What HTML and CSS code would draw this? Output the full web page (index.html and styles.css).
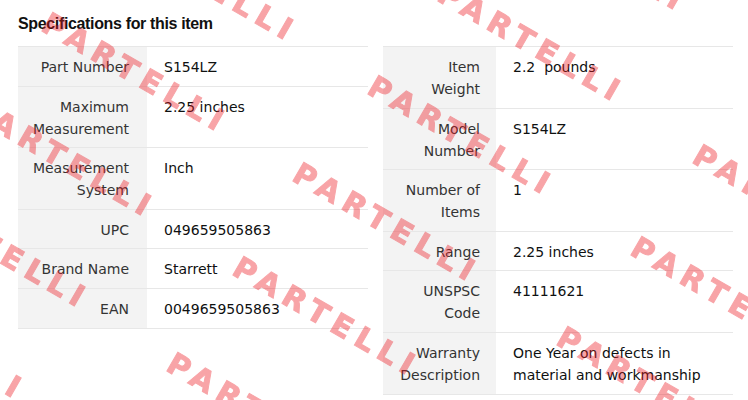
FILE: index.html
```html
<!doctype html>
<html lang="en">
<head>
    <meta charset="UTF-8">
    <title>Specifications for this item</title>
    <link rel="stylesheet" href="styles.css">
</head>
<body>
    <div class="specs">
        <h2 class="title">Specifications for this item</h2>
        <div class="tables">
            <table class="spec left">
                <tr><th>Part Number</th><td>S154LZ</td></tr>
                <tr><th>Maximum Measurement</th><td>2.25 inches</td></tr>
                <tr><th>Measurement System</th><td>Inch</td></tr>
                <tr><th>UPC</th><td>049659505863</td></tr>
                <tr><th>Brand Name</th><td>Starrett</td></tr>
                <tr><th>EAN</th><td>0049659505863</td></tr>
            </table>
            <table class="spec right">
                <tr><th>Item Weight</th><td>2.2&nbsp; pounds</td></tr>
                <tr><th>Model Number</th><td>S154LZ</td></tr>
                <tr><th>Number of Items</th><td>1</td></tr>
                <tr><th>Range</th><td>2.25 inches</td></tr>
                <tr><th>UNSPSC Code</th><td>41111621</td></tr>
                <tr><th>Warranty Description</th><td>One Year on defects in material and workmanship</td></tr>
            </table>
        </div>
    </div>

    <!-- watermark over the page -->
    <div class="marks" aria-hidden="true">
        <span class="mark m0">PARTELLI</span>
        <span class="mark m1">PARTELLI</span>
        <span class="mark m2">PARTELLI</span>
        <span class="mark m3">PARTELLI</span>
        <span class="mark m4">PARTELLI</span>
        <span class="mark m5">PARTELLI</span>
        <span class="mark m6">PARTELLI</span>
        <span class="mark m7">PARTELLI</span>
        <span class="mark m8">PARTELLI</span>
        <span class="mark m9">PARTELLI</span>
        <span class="mark m10">PARTELLI</span>
        <span class="mark m11">PARTELLI</span>
        <span class="mark m12">PARTELLI</span>
        <span class="mark m13">PARTELLI</span>
    </div>
</body>
</html>
```

FILE: styles.css
```css
* {
    margin: 0;
    padding: 0;
    box-sizing: border-box;
}
body {
    background: #fff;
    font: 14px/22px "DejaVu Sans", sans-serif;
    color: #0f1111;
}
.specs {
    padding: 14px 0 0 18px;
}
.title {
    font: bold 16px/20px "Liberation Sans", Arial, sans-serif;
    letter-spacing: -0.35px;
    color: #111;
    margin-bottom: 12px;
}
.tables {
    display: flex;
    align-items: flex-start;
    gap: 15px;
}
.spec {
    flex: none;
    width: 350px;
    table-layout: fixed;
    border-collapse: collapse;
}
.spec tr {
    border-top: 1px solid #e7e7e7;
    border-bottom: 1px solid #e7e7e7;
}
.spec th,
.spec td {
    vertical-align: top;
    padding: 9px 0 7.6px 17px;
}
.spec th {
    background-color: #f3f3f3;
    font-weight: normal;
    text-align: right;
    color: #333;
}
.left th {
    width: 129px;
    padding-left: 12px;
    padding-right: 18px;
}
.right th {
    width: 113px;
    padding-left: 14px;
    padding-right: 16px;
}
.marks {
    position: fixed;
    top: 0;
    left: 0;
    right: 0;
    bottom: 0;
    overflow: hidden;
    pointer-events: none;
}
.mark {
    position: absolute;
    white-space: nowrap;
    font: bold 30px/1 "DejaVu Sans", sans-serif;
    letter-spacing: 7px;
    color: #ed1c24;
    -webkit-text-stroke: 1px #ed1c24;
    opacity: .4;
    transform: rotate(30deg);
    transform-origin: 0 0;
}
.m0 { left: 121px; top: -83px; }
.m1 { left: 52px; top: 8px; }
.m2 { left: 448px; top: -22px; }
.m3 { left: 511px; top: -113px; }
.m4 { left: 378px; top: 71px; }
.m5 { left: 703px; top: 140px; }
.m6 { left: 303px; top: 158px; }
.m7 { left: 243px; top: 252px; }
.m8 { left: -21px; top: 93px; }
.m9 { left: -87px; top: 184px; }
.m10 { left: 177px; top: 348px; }
.m11 { left: -151px; top: 275px; }
.m12 { left: 641px; top: 232px; }
.m13 { left: 567px; top: 322px; }
```
